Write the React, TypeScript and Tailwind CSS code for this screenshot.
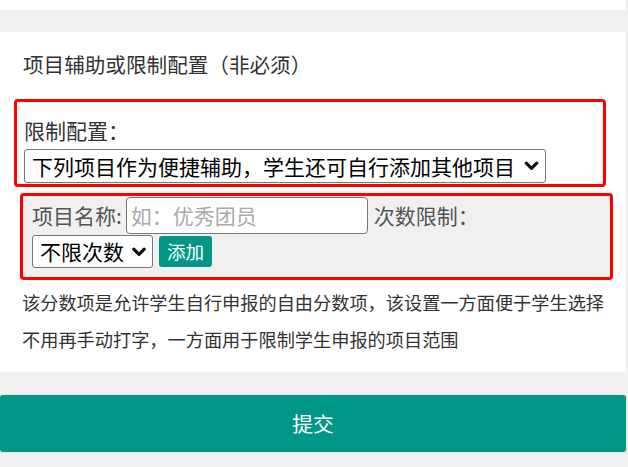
import React from "react";

function Chevron({ className }: { className?: string }) {
  return (
    <svg viewBox="0 0 14 10" className={className} fill="none">
      <polyline points="1.8,2.2 7,7.4 12.2,2.2" stroke="#111" strokeWidth="3.2" strokeLinecap="round" strokeLinejoin="round" />
    </svg>
  );
}

export default function App() {
  return (
    <div className="w-[628px] h-[467px] overflow-hidden bg-[#f0f0f0] pr-[2px] font-['Noto_Sans_CJK_SC','Microsoft_YaHei',sans-serif] [text-spacing-trim:space-all]">
      {/* tail of previous card */}
      <div className="h-[10px] bg-white" />

      <div className="mt-[22px] bg-white pt-[18px] pl-[14px] pr-[13px] pb-[14px]">
        <div className="pl-[9px] text-[20.6px] leading-[28px] text-[#333]">项目辅助或限制配置（非必须）</div>

        {/* limit config */}
        <div className="mt-[21px] w-[592px] border-[3px] border-[#ff0000] rounded-[4px] pl-[7px] pt-[13px] pb-[1px]">
          <div className="text-[21px] leading-[30px] text-[#333]">限制配置：</div>
          <div className="mt-[4px] w-[522px] h-[34px] border border-[#767676] rounded-[3px] bg-white flex items-center pl-[7px] pr-[6px]">
            <span className="text-[21px] leading-none text-black whitespace-nowrap">下列项目作为便捷辅助，学生还可自行添加其他项目</span>
            <Chevron className="ml-auto shrink-0 w-[15px] h-[10px]" />
          </div>
        </div>

        {/* add item */}
        <div className="mt-[6px] ml-[6px] w-[593px] border-[3px] border-[#ff0000] rounded-[4px] bg-[#f0f0f0] pl-[9px] pt-[1px] pb-[9px] flex flex-col gap-[1px]">
          <div className="flex items-center">
            <span className="text-[21px] text-[#555] leading-none">项目名称:</span>
            <div className="ml-[4px] w-[242px] h-[37px] border border-[#767676] rounded-[4px] bg-white flex items-center pl-[4px]">
              <span className="text-[21px] leading-none text-[#aaa]">如：优秀团员</span>
            </div>
            <span className="ml-[6px] text-[21px] text-[#555] leading-none">次数限制：</span>
          </div>
          <div className="flex items-center">
            <div className="w-[121px] h-[33px] border border-[#767676] rounded-[3px] bg-white flex items-center pl-[7px] pr-[6px]">
              <span className="text-[21px] leading-none text-black whitespace-nowrap">不限次数</span>
              <Chevron className="ml-auto shrink-0 w-[14px] h-[10px]" />
            </div>
            <button className="ml-[6px] h-[31px] px-[8px] rounded-[3px] bg-[#009688] text-white text-[18.6px] leading-none">添加</button>
          </div>
        </div>

        <p className="mt-[4px] pl-[8px] text-[18.2px] leading-[37px] text-[#333]">
          该分数项是允许学生自行申报的自由分数项，该设置一方面便于学生选择不用再手动打字，一方面用于限制学生申报的项目范围
        </p>
      </div>

      <button className="mt-[23px] w-full h-[57px] rounded-[3px] bg-[#009688] text-white text-[20.8px] shadow-[0_0_2px_rgba(0,0,0,0.15)]">
        提交
      </button>
    </div>
  );
}
